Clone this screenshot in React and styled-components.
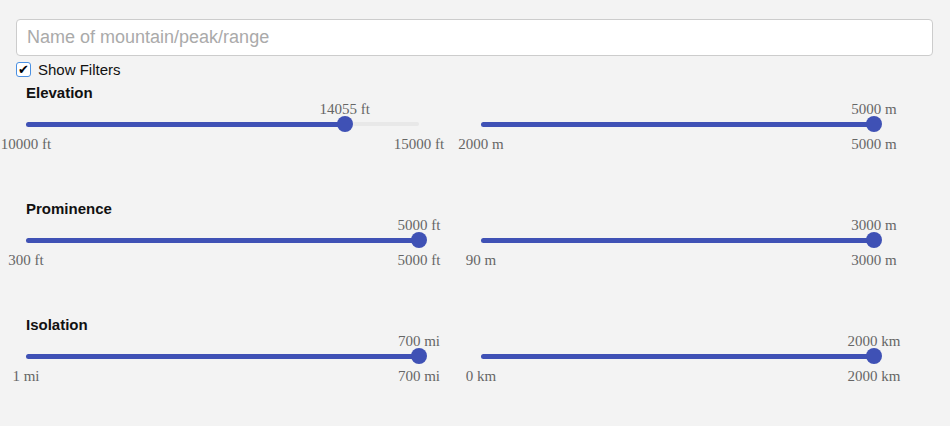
import React, { useState } from 'react'
import styled, { createGlobalStyle } from 'styled-components'

const GlobalStyle = createGlobalStyle`
  html, body {
    margin: 0;
    padding: 0;
    background: #f3f3f3;
    font-family: "Liberation Sans", Arial, sans-serif;
  }
`

const Page = styled.div`
  padding: 19px 17px 0 16px;
`

const Search = styled.input`
  display: block;
  box-sizing: border-box;
  width: 100%;
  height: 37px;
  padding: 0 10px;
  border: 1px solid #cccccc;
  border-radius: 4px;
  background: #ffffff;
  font-family: "Liberation Sans", Arial, sans-serif;
  font-size: 18px;
  color: #333;
  outline: none;
  &::placeholder {
    color: #aaaaaa;
  }
`

const Toggle = styled.label`
  display: flex;
  align-items: center;
  gap: 7px;
  margin-top: 5px;
  height: 17px;
  font-size: 15px;
  color: #111;
  cursor: pointer;
`

const Box = styled.span`
  box-sizing: border-box;
  width: 15px;
  height: 15px;
  border: 1px solid #4a90e2;
  border-radius: 3px;
  background: #fff;
  display: flex;
  align-items: center;
  justify-content: center;
  font-size: 13px;
  line-height: 1;
  color: #000;
`

const Filters = styled.div`
  padding-left: 10px;
`

const Section = styled.section`
  height: 116px;
  padding-top: 6px;
  box-sizing: border-box;
`

const Heading = styled.h3`
  margin: 0;
  font-size: 15px;
  font-weight: bold;
  line-height: 18px;
  color: #111;
`

const Columns = styled.div`
  display: grid;
  grid-template-columns: 393px 393px;
  column-gap: 62px;
`

const SliderBox = styled.div`
  display: flex;
  flex-direction: column;
  margin-top: -1px;
`

const LabelRow = styled.div`
  display: flex;
  justify-content: ${p => (p.$spread ? 'space-between' : 'flex-start')};
  height: 17px;
`

const Anchor = styled.div`
  width: 0;
  display: flex;
  justify-content: center;
`

const Tag = styled.span`
  white-space: nowrap;
  font-family: "Liberation Serif", "Times New Roman", serif;
  font-size: 15px;
  line-height: 17px;
  color: #666;
`

const Rail = styled.div`
  margin: 4px 0 10px;
  height: 4px;
  border-radius: 2px;
  background: #e8e8e8;
`

const Fill = styled.div`
  position: relative;
  height: 5px;
  border-radius: 3px;
  background: #3f51b5;
`

const Thumb = styled.div`
  position: absolute;
  right: -8px;
  top: -6px;
  width: 16px;
  height: 16px;
  border-radius: 50%;
  background: #3f51b5;
`

function Slider({ min, max, value, unit }) {
  const pct = ((value - min) / (max - min)) * 100
  return (
    <SliderBox>
      <LabelRow>
        <Anchor style={{ marginLeft: `${pct}%` }}>
          <Tag>{value} {unit}</Tag>
        </Anchor>
      </LabelRow>
      <Rail>
        <Fill style={{ width: `${pct}%` }}>
          <Thumb />
        </Fill>
      </Rail>
      <LabelRow $spread>
        <Anchor><Tag>{min} {unit}</Tag></Anchor>
        <Anchor><Tag>{max} {unit}</Tag></Anchor>
      </LabelRow>
    </SliderBox>
  )
}

const filters = [
  { name: 'Elevation', a: [10000, 15000, 14055, 'ft'], b: [2000, 5000, 5000, 'm'] },
  { name: 'Prominence', a: [300, 5000, 5000, 'ft'], b: [90, 3000, 3000, 'm'] },
  { name: 'Isolation', a: [1, 700, 700, 'mi'], b: [0, 2000, 2000, 'km'] },
]

export default function App() {
  const [show, setShow] = useState(true)
  return (
    <Page>
      <GlobalStyle />
      <Search placeholder="Name of mountain/peak/range" />
      <Toggle onClick={() => setShow(!show)}>
        <Box>{show ? '✔' : ''}</Box>
        Show Filters
      </Toggle>
      {show && (
        <Filters>
          {filters.map(f => (
            <Section key={f.name}>
              <Heading>{f.name}</Heading>
              <Columns>
                <Slider min={f.a[0]} max={f.a[1]} value={f.a[2]} unit={f.a[3]} />
                <Slider min={f.b[0]} max={f.b[1]} value={f.b[2]} unit={f.b[3]} />
              </Columns>
            </Section>
          ))}
        </Filters>
      )}
    </Page>
  )
}
